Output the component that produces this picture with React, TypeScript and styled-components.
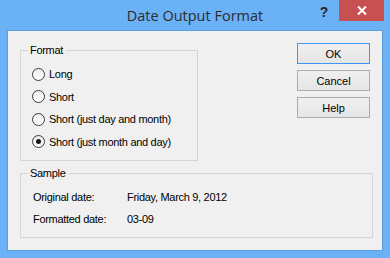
import { createGlobalStyle, styled } from 'styled-components';

const GlobalStyle = createGlobalStyle`
  html, body {
    margin: 0;
    padding: 0;
    background: #6ab1f6;
  }
`;

const Window = styled.div`
  width: 390px;
  height: 258px;
  box-sizing: border-box;
  background: #6ab1f6;
  padding: 0 7px 7px;
  display: flex;
  flex-direction: column;
  font-family: 'Liberation Sans', Arial, sans-serif;
`;

const TitleBar = styled.div`
  height: 30px;
  display: grid;
  grid-template-columns: 1fr auto 1fr;
  align-items: start;
`;

const Title = styled.div`
  grid-column: 2;
  padding-top: 6px;
  font-family: 'Open Sans', 'Noto Sans', sans-serif;
  font-size: 14.5px;
  line-height: 20px;
  color: #2c2c2c;
`;

const Controls = styled.div`
  grid-column: 3;
  justify-self: end;
  display: flex;
  align-items: flex-start;
  margin-right: -1px;
`;

const HelpGlyph = styled.div`
  width: 22px;
  padding-top: 5px;
  margin-right: 4px;
  text-align: center;
  font-size: 14px;
  font-weight: bold;
  line-height: 14px;
  color: #262626;
`;

const CloseButton = styled.div`
  width: 45px;
  height: 21px;
  background: #c75050;
  display: flex;
  align-items: center;
  justify-content: center;
`;

const Client = styled.div`
  flex: 1;
  background: #f0f0f0;
  border: 1px solid #5d9edc;
  padding: 12px 10px 0 12px;
  display: flex;
  flex-direction: column;
  gap: 6px;
`;

const TopRow = styled.div`
  display: flex;
  justify-content: space-between;
  align-items: flex-start;
`;

const Group = styled.fieldset<{ $width: number; $top?: number }>`
  margin: ${(p) => p.$top ?? 0}px 0 0;
  width: ${(p) => p.$width}px;
  box-sizing: border-box;
  border: 1px solid #d5d5d5;
  padding: 6px 8px 7px 11px;
`;

const Legend = styled.legend`
  padding: 0 3px 0 2px;
  margin-left: -4px;
  font-size: 11px;
  letter-spacing: -0.3px;
  line-height: 13px;
  color: #000;
`;

const RadioRow = styled.label`
  height: 22.5px;
  display: flex;
  align-items: center;
  gap: 4px;
  font-size: 11px;
  letter-spacing: -0.3px;
  color: #000;
`;

const RadioCircle = styled.span<{ $checked?: boolean }>`
  width: 11px;
  height: 11px;
  border-radius: 50%;
  border: 1px solid #3c3c3c;
  background: linear-gradient(#ececec, #ffffff);
  display: flex;
  align-items: center;
  justify-content: center;
  &::after {
    content: '';
    display: ${(p) => (p.$checked ? 'block' : 'none')};
    width: 5px;
    height: 5px;
    border-radius: 50%;
    background: #1a1a1a;
  }
`;

const ButtonColumn = styled.div`
  display: flex;
  flex-direction: column;
  gap: 6px;
  margin-right: 2px;
`;

const DialogButton = styled.div<{ $default?: boolean }>`
  width: 73px;
  height: 21px;
  box-sizing: border-box;
  border: 1px solid ${(p) => (p.$default ? '#3c97f4' : '#acacac')};
  background: linear-gradient(#f0f0f0, #e5e5e5);
  display: flex;
  align-items: center;
  justify-content: center;
  font-size: 11px;
  color: #000;
`;

const SampleRow = styled.div`
  height: 22px;
  display: flex;
  align-items: center;
  padding-left: 1px;
  font-size: 11px;
  letter-spacing: -0.3px;
  color: #000;
`;

const SampleLabel = styled.span`
  width: 94px;
`;

const formats = [
  { label: 'Long' },
  { label: 'Short' },
  { label: 'Short (just day and month)' },
  { label: 'Short (just month and day)', checked: true },
];

const App = () => {
  return (
    <>
      <GlobalStyle />
      <Window>
        <TitleBar>
          <Title>Date Output Format</Title>
          <Controls>
            <HelpGlyph>?</HelpGlyph>
            <CloseButton>
              <svg width='10' height='9' viewBox='0 0 10 9'>
                <path d='M1 0.5 L9 8.5 M9 0.5 L1 8.5' stroke='#fff' strokeWidth='2' />
              </svg>
            </CloseButton>
          </Controls>
        </TitleBar>
        <Client>
          <TopRow>
            <Group $width={178} $top={1}>
              <Legend>Format</Legend>
              {formats.map((f) => (
                <RadioRow key={f.label}>
                  <RadioCircle $checked={f.checked} />
                  {f.label}
                </RadioRow>
              ))}
            </Group>
            <ButtonColumn>
              <DialogButton $default>OK</DialogButton>
              <DialogButton>Cancel</DialogButton>
              <DialogButton>Help</DialogButton>
            </ButtonColumn>
          </TopRow>
          <Group $width={353}>
            <Legend>Sample</Legend>
            <SampleRow>
              <SampleLabel>Original date:</SampleLabel>
              Friday, March 9, 2012
            </SampleRow>
            <SampleRow>
              <SampleLabel>Formatted date:</SampleLabel>
              03-09
            </SampleRow>
          </Group>
        </Client>
      </Window>
    </>
  );
};

export default App;
